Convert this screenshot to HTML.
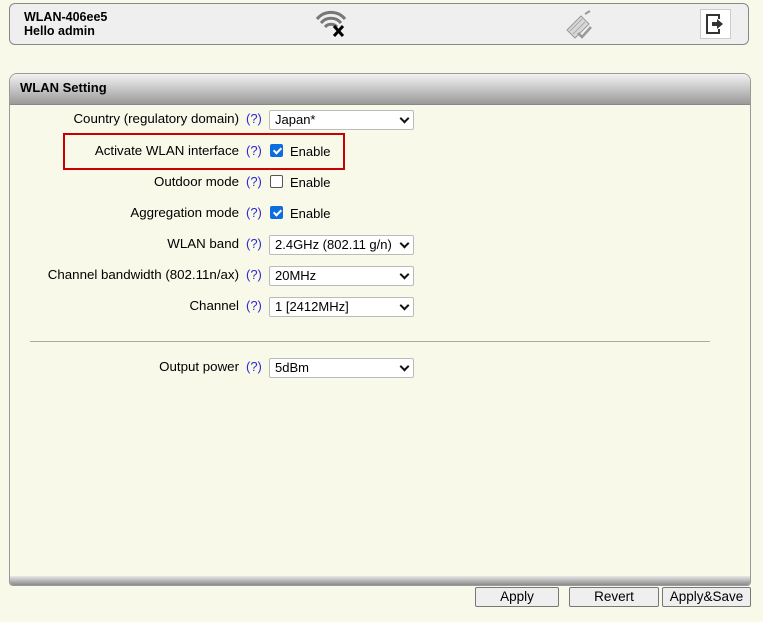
<!DOCTYPE html>
<html><head><style>
body{margin:0;width:763px;height:622px;background:#f9f9ea;font-family:"Liberation Sans",sans-serif;font-size:13px;position:relative;overflow:hidden}
.abs{position:absolute}
.hdr{left:9px;top:3px;width:738px;height:40px;background:#efefef;border:1px solid #888;border-radius:6px}
.hdr b{position:absolute;left:14px;font-size:12.5px;line-height:14px}
.panel{left:9px;top:73px;width:740px;height:511px;border:1px solid #999;border-radius:8px 8px 4px 4px;overflow:hidden;background:#f9f9ea}
.ph{height:30px;background:linear-gradient(#f2f2f2,#9a9a9a);border-bottom:1px solid #888;font-weight:bold;font-size:13px;line-height:28px;padding-left:10px}
.pf{position:absolute;left:0;right:0;bottom:0;height:9px;background:linear-gradient(#e8e8e8,#8a8a8a)}
.lbl{position:absolute;right:524px;text-align:right;white-space:nowrap;font-size:13.3px}
.q{position:absolute;left:246px;color:#2a2ad0}
.sel{position:absolute;left:269px;width:138px;height:18px;border:1px solid #bbb;border-radius:2px;background:#fff;line-height:18px;padding-left:5px;box-sizing:content-box}
.sel:after{content:"";position:absolute;right:5px;top:4px;width:5px;height:5px;border-right:2px solid #111;border-bottom:2px solid #111;transform:rotate(45deg)}
.cb{position:absolute;left:270px;width:11px;height:11px;border-radius:2px}
.on{background:#0b6dde;border:1px solid #0b6dde}
.on:after{content:"";position:absolute;left:3.5px;top:0.5px;width:3px;height:6px;border-right:2px solid #fff;border-bottom:2px solid #fff;transform:rotate(45deg)}
.off{background:#fff;border:1px solid #555}
.en{position:absolute;left:290px}
.btn{position:absolute;top:587px;height:18px;border:1px solid #777;border-radius:2px;background:#efefef;text-align:center;line-height:18px;font-size:13.5px}
</style></head><body>
<div class="abs hdr"><b style="top:6px">WLAN-406ee5</b><b style="top:20px">Hello admin</b></div>
<svg class="abs" style="left:314px;top:10px" width="36" height="28" viewBox="0 0 36 28">
<path d="M3 9 A18 18 0 0 1 31 9" stroke="#777" stroke-width="3" fill="none"/>
<path d="M7 13 A13 13 0 0 1 27 13" stroke="#777" stroke-width="3" fill="none"/>
<path d="M11 17 A8 8 0 0 1 23 17" stroke="#777" stroke-width="3" fill="none"/>
<path d="M20 16 L29 26 M29 16 L20 26" stroke="#000" stroke-width="3"/></svg>
<svg class="abs" style="left:563px;top:10px" width="34" height="30" viewBox="0 0 34 30">
<path d="M4 20 L18 6 L26 14 L12 28 Z" fill="#d8d8d8" stroke="#999"/>
<path d="M7 21 L19 9 M10 24 L22 12" stroke="#aaa"/>
<path d="M22 4 L27 1" stroke="#999" stroke-width="2"/>
<path d="M15 23 L19 27 L28 17" stroke="#999" stroke-width="2.5" fill="none"/></svg>
<div class="abs" style="left:700px;top:9px;width:29px;height:28px;background:#fff;border:1px solid #ccc"></div>
<svg class="abs" style="left:704px;top:13px" width="22" height="22" viewBox="0 0 22 22">
<path d="M15 6 V2 H3 V20 H15 V16" stroke="#333" stroke-width="2" fill="none"/>
<path d="M8 9 H13 V6 L19 11 L13 16 V13 H8 Z" fill="#333"/></svg>
<div class="abs panel"><div class="ph">WLAN Setting</div><div class="pf"></div></div>
<div class="abs" style="left:63px;top:133px;width:278px;height:33px;border:2px solid #c80000"></div>

<div class="lbl" style="top:111px">Country (regulatory domain)</div><div class="q" style="top:111px">(?)</div><div class="sel" style="top:110px">Japan*</div>
<div class="lbl" style="top:143px">Activate WLAN interface</div><div class="q" style="top:143px">(?)</div><div class="cb on" style="top:144px"></div><div class="en" style="top:144px">Enable</div>
<div class="lbl" style="top:174px">Outdoor mode</div><div class="q" style="top:174px">(?)</div><div class="cb off" style="top:175px"></div><div class="en" style="top:175px">Enable</div>
<div class="lbl" style="top:205px">Aggregation mode</div><div class="q" style="top:205px">(?)</div><div class="cb on" style="top:206px"></div><div class="en" style="top:206px">Enable</div>
<div class="lbl" style="top:236px">WLAN band</div><div class="q" style="top:236px">(?)</div><div class="sel" style="top:235px">2.4GHz (802.11 g/n)</div>
<div class="lbl" style="top:267px">Channel bandwidth (802.11n/ax)</div><div class="q" style="top:267px">(?)</div><div class="sel" style="top:266px">20MHz</div>
<div class="lbl" style="top:298px">Channel</div><div class="q" style="top:298px">(?)</div><div class="sel" style="top:297px">1 [2412MHz]</div>
<div class="abs" style="left:30px;top:341px;width:680px;height:1px;background:#aaa"></div>
<div class="lbl" style="top:359px">Output power</div><div class="q" style="top:359px">(?)</div><div class="sel" style="top:358px">5dBm</div>

<div class="btn" style="left:475px;width:82px">Apply</div>
<div class="btn" style="left:569px;width:88px">Revert</div>
<div class="btn" style="left:662px;width:87px">Apply&amp;Save</div>
</body></html>
